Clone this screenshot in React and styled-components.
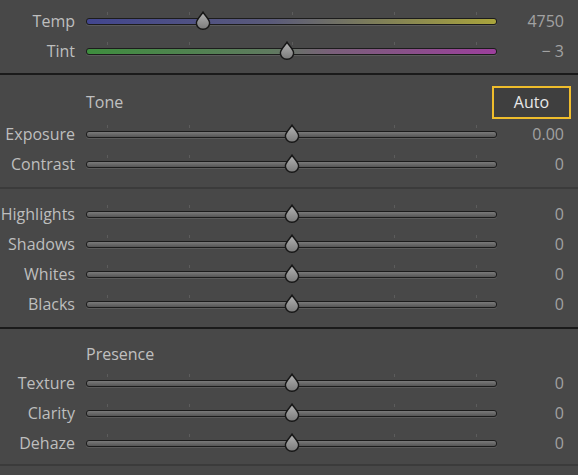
import styled, { createGlobalStyle } from 'styled-components';

const GlobalStyle = createGlobalStyle`
  html, body {
    margin: 0;
    padding: 0;
    background: #484848;
  }
  body {
    font-family: "Open Sans", "Noto Sans", "DejaVu Sans", sans-serif;
  }
`;

const sections = [
  {
    rows: [
      { label: 'Temp', value: '4750', pos: 0.285, fill: 'linear-gradient(90deg, #42468f 0%, #5a5a7a 45%, #7d7d5a 70%, #a9a43c 100%)' },
      { label: 'Tint', value: '− 3', pos: 0.49, fill: 'linear-gradient(90deg, #3e8e3e 0%, #5f7a5f 45%, #7a5f7a 60%, #9c3f9c 100%)' },
    ],
    padTop: 6,
    padBottom: 7,
    line: '#1a1a1a',
  },
  {
    title: 'Tone',
    auto: true,
    rows: [
      { label: 'Exposure', value: '0.00', pos: 0.5 },
      { label: 'Contrast', value: '0', pos: 0.5 },
    ],
    padTop: 10,
    padBottom: 8,
    line: '#3b3b3b',
  },
  {
    rows: [
      { label: 'Highlights', value: '0', pos: 0.5 },
      { label: 'Shadows', value: '0', pos: 0.5 },
      { label: 'Whites', value: '0', pos: 0.5 },
      { label: 'Blacks', value: '0', pos: 0.5 },
    ],
    padTop: 10,
    padBottom: 8,
    line: '#1a1a1a',
  },
  {
    title: 'Presence',
    rows: [
      { label: 'Texture', value: '0', pos: 0.5 },
      { label: 'Clarity', value: '0', pos: 0.5 },
      { label: 'Dehaze', value: '0', pos: 0.5 },
    ],
    padTop: 11,
    padBottom: 6,
    line: '#3b3b3b',
  },
];

const ticks = [0.05, 0.25, 0.5, 0.75, 0.95];

const Thumb = () => (
  <ThumbSvg width="16" height="19" viewBox="0 0 16 19">
    <defs>
      <linearGradient id="tg" x1="0" y1="0" x2="0" y2="1">
        <stop offset="0" stopColor="#b4b4b4" />
        <stop offset="1" stopColor="#7a7a7a" />
      </linearGradient>
    </defs>
    <path
      d="M8 1.2 C9.5 4 14.6 8.5 14.6 12 A6.6 6.3 0 0 1 1.4 12 C1.4 8.5 6.5 4 8 1.2 Z"
      fill="url(#tg)"
      stroke="#161616"
      strokeWidth="1.4"
    />
  </ThumbSvg>
);

const SliderRow = ({ label, value, pos, fill }) => (
  <Row>
    <Label>{label}</Label>
    <TrackArea>
      {ticks.map((t) => (
        <Tick key={t} style={{ left: `${t * 100}%` }} />
      ))}
      <Track $fill={fill} />
      <ThumbWrap style={{ left: `${pos * 100}%` }}>
        <Thumb />
      </ThumbWrap>
    </TrackArea>
    <Value>{value}</Value>
  </Row>
);

export default function App() {
  return (
    <Panel>
      <GlobalStyle />
      {sections.map((s, i) => (
        <Section key={i} $top={s.padTop} $bottom={s.padBottom} $line={s.line}>
          {s.title && (
            <Header $tall={s.auto}>
              <Title>{s.title}</Title>
              {s.auto && <AutoButton>Auto</AutoButton>}
            </Header>
          )}
          {s.rows.map((r) => (
            <SliderRow key={r.label} {...r} />
          ))}
        </Section>
      ))}
    </Panel>
  );
}

const Panel = styled.div`
  width: 578px;
  height: 475px;
  background: #484848;
  display: flex;
  flex-direction: column;
  overflow: hidden;
`;

const Section = styled.div`
  display: flex;
  flex-direction: column;
  padding: ${({ $top }) => $top}px 0 ${({ $bottom }) => $bottom}px;
  border-bottom: 2px solid ${({ $line }) => $line};
`;

const Header = styled.div`
  height: ${({ $tall }) => ($tall ? 34 : 28)}px;
  display: flex;
  align-items: center;
  justify-content: space-between;
  padding: 0 7px 0 86px;
`;

const Title = styled.span`
  font-size: 16px;
  color: #c0c0c0;
`;

const AutoButton = styled.div`
  width: 75px;
  height: 29px;
  box-sizing: content-box;
  border: 2.5px solid #efbd2c;
  background: #3f3f3f;
  display: flex;
  align-items: center;
  justify-content: center;
  font-size: 16px;
  color: #e8e8e8;
`;

const Row = styled.div`
  height: 30px;
  display: grid;
  grid-template-columns: 76px 411px 1fr;
  column-gap: 10px;
  align-items: center;
  padding-right: 14px;
`;

const Label = styled.span`
  text-align: right;
  font-size: 16px;
  color: #bebebe;
  white-space: nowrap;
  margin-left: -8px;
  margin-right: 1px;
`;

const Value = styled.span`
  text-align: right;
  font-size: 16px;
  color: #a2a2a2;
`;

const TrackArea = styled.div`
  position: relative;
  height: 30px;
  display: flex;
  align-items: center;
`;

const Track = styled.div`
  width: 100%;
  height: 5px;
  border: 1px solid #1c1c1c;
  border-radius: 3px;
  background: ${({ $fill }) =>
    $fill || 'linear-gradient(180deg, #7a7a7a 0%, #646464 60%, #555555 100%)'};
  box-shadow: 0 1px 0 rgba(110, 110, 110, 0.5);
`;

const Tick = styled.div`
  position: absolute;
  top: 6px;
  width: 1px;
  height: 3px;
  background: #5c5c5c;
`;

const ThumbWrap = styled.div`
  position: absolute;
  top: 5px;
  transform: translateX(-50%);
  line-height: 0;
`;

const ThumbSvg = styled.svg`
  display: block;
`;
